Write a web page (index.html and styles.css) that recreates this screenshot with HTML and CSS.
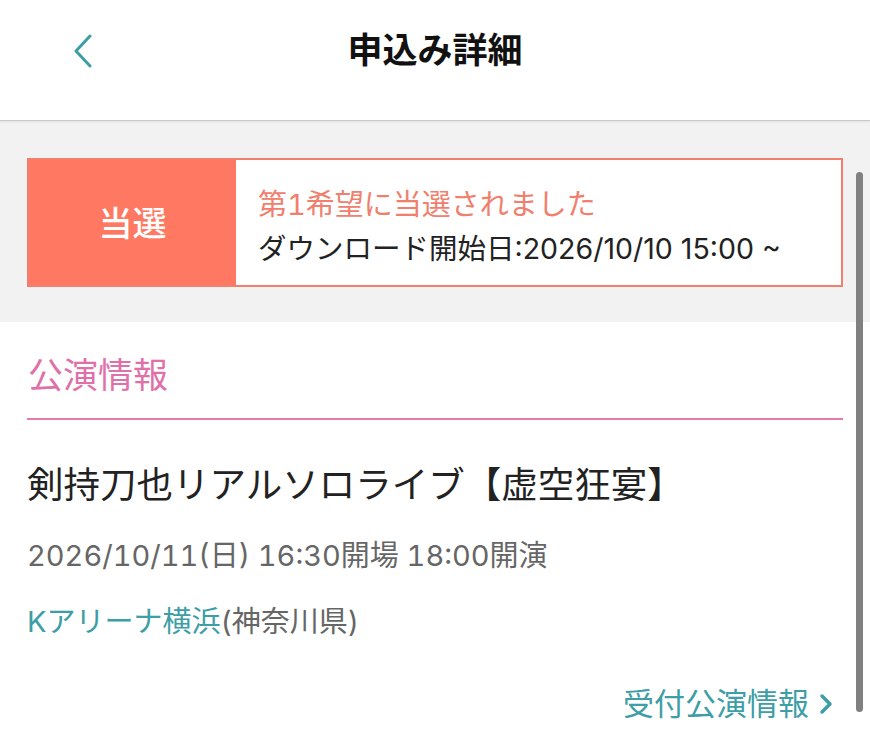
FILE: index.html
```html
<!DOCTYPE html>
<html lang="ja">
<head>
<meta charset="utf-8">
<link rel="stylesheet" href="styles.css">
</head>
<body>
<div class="page">
  <header class="header">
    <span class="back">
      <svg width="22" height="34" viewBox="0 0 22 34"><path d="M18 2 L4 17 L18 32" fill="none" stroke="#3d9ea6" stroke-width="3" stroke-linecap="round" stroke-linejoin="round"/></svg>
    </span>
    <h1 class="title">申込み詳細</h1>
  </header>
  <div class="status-area">
    <div class="status-card">
      <div class="status-label">当選</div>
      <div class="status-body">
        <div class="status-main">第1希望に当選されました</div>
        <div class="status-sub">ダウンロード開始日:2026/10/10 15:00 ~</div>
      </div>
    </div>
  </div>
  <section class="info">
    <h2 class="info-title">公演情報</h2>
    <div class="event-name">剣持刀也リアルソロライブ【虚空狂宴】</div>
    <div class="event-date">2026/10/11(日) 16:30開場 18:00開演</div>
    <div class="event-venue"><span class="venue-name">Kアリーナ横浜</span>(神奈川県)</div>
    <div class="more-row"><span class="more">受付公演情報<svg class="more-icon" width="16" height="22" viewBox="0 0 16 22"><path d="M4 3 L12 11 L4 19" fill="none" stroke="#3d9ea6" stroke-width="3.5" stroke-linecap="round" stroke-linejoin="round"/></svg></span></div>
  </section>
  <div class="scrollbar"></div>
</div>
</body>
</html>
```

FILE: styles.css
```css
* { box-sizing: border-box; }
html, body { margin: 0; padding: 0; }
body {
  width: 870px;
  height: 745px;
  overflow: hidden;
  background: #fff;
  font-family: Inter, "Noto Sans CJK JP", sans-serif;
  font-variant-numeric: tabular-nums;
  color: #222;
}
.page { position: relative; width: 870px; height: 745px; }
.header {
  height: 121px;
  display: flex;
  align-items: center;
  justify-content: center;
  position: relative;
  border-bottom: 1px solid #c8c8c8;
  box-shadow: 0 1px 2px rgba(0,0,0,0.08);
  padding-bottom: 20px;
}
.back {
  position: absolute;
  left: 72px;
  top: 34px;
  width: 22px;
  height: 34px;
}
.back svg { display: block; }
.title {
  margin: 0;
  font-size: 35px;
  font-weight: 700;
  color: #111;
  line-height: 50px;
}
.status-area {
  background: #f2f2f2;
  padding: 37px 27px 35px 27px;
  height: 201px;
}
.status-card {
  display: flex;
  height: 129px;
  border: 2px solid #f07f6e;
  background: #fff;
}
.status-label {
  width: 207px;
  background: #ff7862;
  color: #fff;
  font-size: 34px;
  font-weight: 500;
  display: flex;
  align-items: center;
  justify-content: center;
  padding-bottom: 2px;
}
.status-body {
  flex: 1;
  padding: 25px 0 0 22px;
  display: flex;
  flex-direction: column;
  gap: 4px;
}
.status-main { color: #f0806d; font-size: 29px; line-height: 40px; }
.status-sub {
  color: #222;
  font-size: 28.5px;
  line-height: 40px;
  font-variant-numeric: normal;
}
.info { padding: 28px 27px 0 27px; }
.info-title {
  margin: 0;
  color: #e070a8;
  font-size: 35px;
  font-weight: 400;
  line-height: 50px;
  padding-left: 1px;
  padding-bottom: 18px;
  border-bottom: 2px solid #e27bb0;
}
.event-name {
  font-size: 36.5px;
  line-height: 48px;
  margin-top: 41px;
  color: #222;
}
.event-date {
  font-size: 29px;
  line-height: 42px;
  margin-top: 26px;
  color: #666;
}
.event-venue {
  font-size: 29px;
  line-height: 42px;
  margin-top: 24px;
  color: #666;
}
.venue-name { color: #3d9ea6; }
.more-row {
  display: flex;
  justify-content: flex-end;
  margin-top: 40px;
  padding-right: 9px;
}
.more {
  color: #3d9ea6;
  font-size: 31px;
  line-height: 42px;
  display: flex;
  align-items: center;
  gap: 9px;
}
.more-icon { display: block; }
.scrollbar {
  position: absolute;
  left: 856px;
  top: 172px;
  width: 7px;
  height: 540px;
  border-radius: 4px;
  background: #808080;
}
```
